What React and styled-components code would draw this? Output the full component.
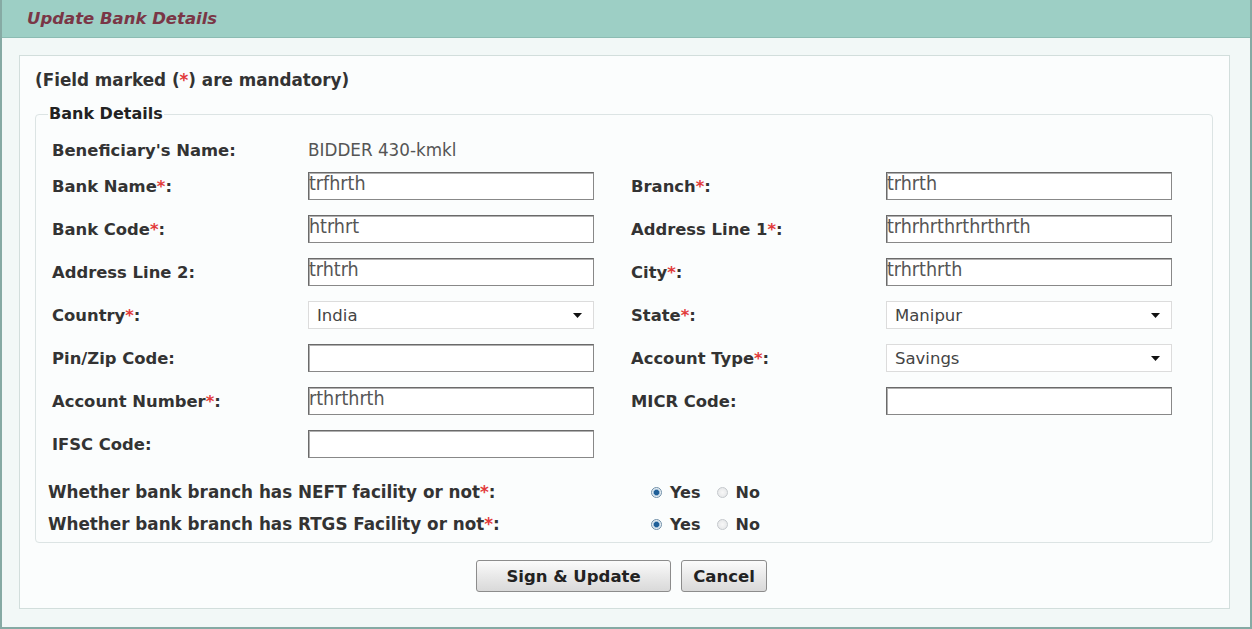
import React from 'react'
import styled, { createGlobalStyle } from 'styled-components'

const GlobalStyle = createGlobalStyle`
  body {
    margin: 0;
    background: #ffffff;
    font-family: "DejaVu Sans", Verdana, sans-serif;
  }
`

const Frame = styled.div`
  width: 1252px;
  height: 629px;
  box-sizing: border-box;
  border: 2px solid #86aaa4;
  border-top: 0;
  background: #f2f8f7;
`

const Header = styled.div`
  height: 37px;
  display: flex;
  align-items: center;
  padding-left: 25px;
  background: #9dcfc5;
  border-bottom: 1px solid #8cbcb3;
`

const Title = styled.h1`
  margin: 0;
  font-size: 16.5px;
  font-style: italic;
  font-weight: bold;
  color: #7a3646;
`

const Panel = styled.div`
  margin: 17px 20px 0 17px;
  padding: 14px 16px 16px 15px;
  border: 1px solid #d2dedc;
  background: #fbfdfd;
`

const Note = styled.div`
  font-size: 16.8px;
  font-weight: bold;
  line-height: 20px;
  color: #333;
`

const Star = styled.span`
  color: #e23a3a;
`

const Group = styled.fieldset`
  margin: 14px 0 0 0;
  padding: 19px 16px 8px 12px;
  min-width: 0;
  border: 1px solid #dce4e4;
  border-radius: 4px;
`

const Legend = styled.legend`
  padding: 0 1px;
  font-size: 16px;
  font-weight: bold;
  line-height: 20px;
  color: #222;
`

const Grid = styled.div`
  display: grid;
  grid-template-columns: 256px 286px 37px 255px 286px;
  grid-template-rows: 14px repeat(7, 28px);
  row-gap: 15px;
  align-items: center;
  padding-left: 4px;
`

const Label = styled.div`
  grid-column: ${p => p.$col === 2 ? 4 : 1};
  font-size: 16.4px;
  font-weight: bold;
  color: #333;
  white-space: nowrap;
`

const Value = styled.div`
  grid-column: 2;
  font-size: 16.8px;
  color: #555;
  white-space: nowrap;
`

const TextBox = styled.input`
  grid-column: ${p => p.$col === 2 ? 5 : 2};
  box-sizing: border-box;
  width: 286px;
  height: 28px;
  margin: 0;
  padding: 0 0 5px 0;
  border: 1px solid #6a6a6a;
  border-right-color: #888;
  border-bottom-color: #888;
  box-shadow: inset 1px 1px 0 #b0b0b0;
  background: #ffffff;
  font-family: "DejaVu Sans Condensed", "DejaVu Sans", sans-serif;
  font-size: 19.5px;
  color: #555;
  outline: none;
`

const Select = styled.div`
  grid-column: ${p => p.$col === 2 ? 5 : 2};
  box-sizing: border-box;
  width: 286px;
  height: 28px;
  display: flex;
  align-items: center;
  justify-content: space-between;
  padding: 0 11px 0 8px;
  border: 1px solid #dcdcdc;
  background: #ffffff;
  font-size: 16.5px;
  color: #444;
`

const Facility = styled.div`
  display: grid;
  grid-template-columns: 603px auto;
  align-items: center;
  height: 20px;
  margin-top: ${p => p.$first ? '24px' : '12px'};
`

const FacilityLabel = styled.div`
  font-size: 16.8px;
  font-weight: bold;
  color: #333;
  white-space: nowrap;
`

const Choices = styled.div`
  display: flex;
  align-items: center;
  gap: 16px;
`

const Choice = styled.label`
  display: flex;
  align-items: center;
  gap: 8px;
  font-size: 16px;
  font-weight: bold;
  color: #333;
`

const Radio = styled.span`
  box-sizing: border-box;
  width: 11px;
  height: 11px;
  border-radius: 50%;
  border: 1px solid ${p => p.$on ? '#6f8fa8' : '#c4c8cc'};
  background: ${p => p.$on
    ? 'radial-gradient(circle, #1f5f98 0 2.3px, #7fa9cc 2.8px, #e8eef3 3.8px)'
    : 'radial-gradient(circle, #f7f7f7 0, #e2e4e6 100%)'};
`

const Buttons = styled.div`
  display: flex;
  justify-content: center;
  gap: 10px;
  margin-top: 17px;
  padding-right: 5px;
`

const Button = styled.button`
  box-sizing: border-box;
  width: ${p => p.$w}px;
  height: 32px;
  border: 1px solid #8c8c8c;
  border-radius: 3px;
  background: linear-gradient(#fbfbfb, #e9e9e9 50%, #d9d9d9);
  font-family: "DejaVu Sans", sans-serif;
  font-size: 16.5px;
  font-weight: bold;
  color: #222;
`

const Caret = () => (
  <svg width="9" height="5" viewBox="0 0 9 5">
    <path d="M0 0h9L4.5 5z" fill="#111" />
  </svg>
)

const Req = ({ children }) => (
  <>{children}<Star>*</Star>:</>
)

const YesNo = () => (
  <Choices>
    <Choice><Radio $on />Yes</Choice>
    <Choice><Radio />No</Choice>
  </Choices>
)

const App = () => {
  return (
    <>
      <GlobalStyle />
      <Frame>
        <Header>
          <Title>Update Bank Details</Title>
        </Header>
        <Panel>
          <Note>(Field marked (<Star>*</Star>) are mandatory)</Note>
          <Group>
            <Legend>Bank Details</Legend>
            <Grid>
              <Label>Beneficiary's Name:</Label>
              <Value>BIDDER 430-kmkl</Value>

              <Label><Req>Bank Name</Req></Label>
              <TextBox defaultValue="trfhrth" />
              <Label $col={2}><Req>Branch</Req></Label>
              <TextBox $col={2} defaultValue="trhrth" />

              <Label><Req>Bank Code</Req></Label>
              <TextBox defaultValue="htrhrt" />
              <Label $col={2}><Req>Address Line 1</Req></Label>
              <TextBox $col={2} defaultValue="trhrhrthrthrthrth" />

              <Label>Address Line 2:</Label>
              <TextBox defaultValue="trhtrh" />
              <Label $col={2}><Req>City</Req></Label>
              <TextBox $col={2} defaultValue="trhrthrth" />

              <Label><Req>Country</Req></Label>
              <Select>India<Caret /></Select>
              <Label $col={2}><Req>State</Req></Label>
              <Select $col={2}>Manipur<Caret /></Select>

              <Label>Pin/Zip Code:</Label>
              <TextBox defaultValue="" />
              <Label $col={2}><Req>Account Type</Req></Label>
              <Select $col={2}>Savings<Caret /></Select>

              <Label><Req>Account Number</Req></Label>
              <TextBox defaultValue="rthrthrth" />
              <Label $col={2}>MICR Code:</Label>
              <TextBox $col={2} defaultValue="" />

              <Label>IFSC Code:</Label>
              <TextBox defaultValue="" />
            </Grid>
            <Facility $first>
              <FacilityLabel>Whether bank branch has NEFT facility or not<Star>*</Star>:</FacilityLabel>
              <YesNo />
            </Facility>
            <Facility>
              <FacilityLabel>Whether bank branch has RTGS Facility or not<Star>*</Star>:</FacilityLabel>
              <YesNo />
            </Facility>
          </Group>
          <Buttons>
            <Button $w={195}>Sign &amp; Update</Button>
            <Button $w={86}>Cancel</Button>
          </Buttons>
        </Panel>
      </Frame>
    </>
  )
}

export default App
